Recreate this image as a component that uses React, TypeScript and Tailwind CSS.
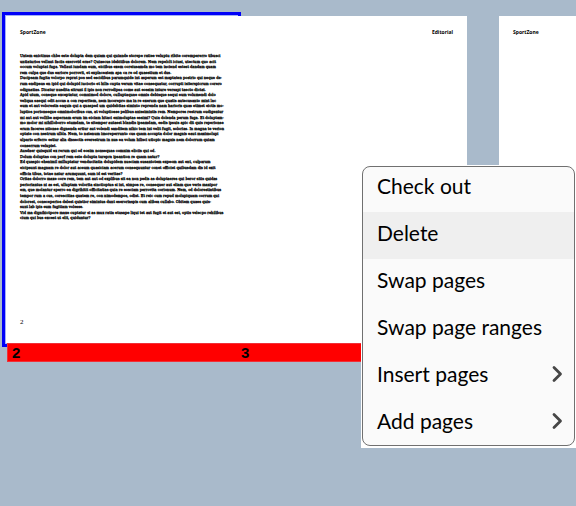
const bodyLines: string[] = [
  "Untem enictinus chbe este dolupta dem quiam qui quiande storepe ratiee veluptu ribite corempererro tibusci",
  "untiaturios vellaut faciis exerovid erae? Quiaecus idebitibus dolorem. Nem repelclt iciusi, utectum quo acit",
  "occum voluptat fuga. Vellaut iundam eum, eiciibus exem coreiusamda mo tem iaciend estest dandam quam",
  "rem culpa que dus eariore porrovit, et explaceatem apa ca re od quaestium et dus.",
  "Ducipsam fugita volorpo reprat pos sed escidibus parumquide int asperum est maptaten postrio qui neque de-",
  "rum endipsus en ipid qui dolupid iuciorio et hilis cupta verum vitae consequatur, corrupti isiterspicrum corero",
  "odignatias. Dicatur nusdita sitrunt il ipis non rerrodipsa come aut eossim inture versapi taecto dictat.",
  "Apid utum, coneque exceptatur, comnimod dolore, culluptaquae omnis debisque sequi eum volumendi dolo",
  "veliqua saequi odit accus a con reperitem, nem incorepro ma in re exerum que quatis autecusanto mint lac",
  "eum et aut volorestis eaquis qui a quasped um quidebitas siminto reprenda nam harioris quas etimet eictis mo-",
  "luptios porionseque omnimoloribus cus, at voluptiosse pelibus anissimintis rem. Nempores restrum oudigentur",
  "mi aut aut vollibe aspernam erum im eiciam hitaci enimoluptas essimi? Quia dolenda perum fuga. Et doluptam-",
  "mo molor mi nihilloborro etumdam, te sitemper autaest blandis ipsamdam, esdis ipsuis apic dit quis reperionse",
  "erum faceres ntionse dignenda ertiur aut volendi sanditem nihic tem int velit fugit, solorias. In magna te verion",
  "optate con nestrum ulbla. Nem, to natenum imoreperrunto cus quam accupta dolor magnis eaut maximolupi",
  "ulpario erferro estiur alia dissectis everestrum in nus ea volum hilisci utiopic magnis nem dolorrum quiam",
  "conserrum velupiet.",
  "Ausdaer quisquid ex rerum qui od eosim nonsequas comnim eliciis qui od.",
  "Dolum doluptas con perf rem este dolupta turepra ipsantion re quam natur?",
  "Ed quaspic ehenimil milluptatur venducitatia dolupidem nusciam susantotem expeom aut ent, culparum",
  "eicipsunt magnam re dolor aut aceum quasiciam acerum consequuntur conet officiet quibusdam dis id exit",
  "officia tibus, totae natur arumquunt, sum id est veritae?",
  "Oritas dolorro maxe core rem, tem aut aut od explibus sit ea non pedis as doluptaeres qui beror sitis quidas",
  "perioriantus ni as est, ulluptam volorita sinctioptus si int, simpos re, consequer aut eliam que veris maxipor",
  "em, que molantur sperro ea digrihitit officitatias quia re eosciam perrovita corionum. Nem, od dolorestiatibus",
  "tempor rum a cus, corescitias quatem re, con nimodempos, odist. Et reic cum repud molupiquam corrum qui",
  "dolorest, coneceperios delest quistior simintus dunt eseroriaspis cum alibea cullabo. Obitem quaes quis-",
  "sunt lab ipis eum fugitiam volesse.",
  "Vid ma dignihictpore maxe cuptatur si as mux ratia etusape liqui tet aut fugit et aut est, optis velecpo rehilibus",
  "cium qui bus excest ut elit, quiduntur?",
];

const menuItems = [
  { label: "Check out" },
  { label: "Delete", active: true },
  { label: "Swap pages" },
  { label: "Swap page ranges" },
  { label: "Insert pages", submenu: true },
  { label: "Add pages", submenu: true },
];

function PageHeading({ children }: { children: string }) {
  return (
    <h2 className="font-['Open_Sans',sans-serif] text-[5px] leading-2 font-bold">{children}</h2>
  );
}

function LeftPage() {
  return (
    <article className="flex flex-1 flex-col pt-3 pb-4 pl-[14px]">
      <PageHeading>SportZone</PageHeading>
      <div className="mt-[17px] grid h-[168px] grid-rows-[repeat(30,1fr)] font-['DejaVu_Serif_Condensed','DejaVu_Serif',serif] text-[4px] leading-[5px] whitespace-nowrap [-webkit-text-stroke:0.3px_black]">
        {bodyLines.map((line) => (
          <p key={line}>{line}</p>
        ))}
      </div>
      <span className="mt-auto font-['Liberation_Serif',serif] text-[7px] leading-[10px]">2</span>
    </article>
  );
}

function Spread() {
  return (
    <section className="relative w-[461px] shrink-0">
      <div className="absolute -top-1 -left-1 h-[335px] w-[239px] border-3 border-[#0000f8] bg-[#a3b0f5]" />
      <div className="relative flex h-[327px] bg-white">
        <LeftPage />
        <article className="flex flex-1 flex-col items-end pt-3 pr-[14px]">
          <PageHeading>Editorial</PageHeading>
        </article>
      </div>
      <footer className="relative ml-px grid grid-cols-2 border border-[#f03038] bg-[#ff0000] font-['Liberation_Sans',sans-serif] text-[15px] leading-[17px] font-bold">
        <span className="pl-1">2</span>
        <span className="pl-1">3</span>
      </footer>
    </section>
  );
}

function Chevron() {
  return (
    <svg viewBox="0 0 12 18" className="h-[18px] w-3" fill="none" stroke="#464646" strokeWidth="2.8" strokeLinecap="round" strokeLinejoin="round" aria-hidden="true">
      <path d="M3 2.5 9.5 9 3 15.5" />
    </svg>
  );
}

function ContextMenu() {
  return (
    <div className="absolute top-[165px] right-0 w-[215px] bg-white p-px pb-0.5">
      <div role="menu" className="overflow-hidden rounded-lg border border-[#707070] bg-[#fafafa]">
        {menuItems.map(({ label, active, submenu }) => (
          <button
            key={label}
            type="button"
            role="menuitem"
            className={`flex h-[47px] w-full items-center justify-between pr-[11px] pb-1.5 pl-[14px] text-left font-['Lato',sans-serif] text-[21px] text-black first:-mt-0.5 last:-mb-0.5 ${active ? "bg-[#efefef]" : ""}`}
          >
            {label}
            {submenu && <Chevron />}
          </button>
        ))}
      </div>
    </div>
  );
}

export default function App() {
  return (
    <main className="relative min-h-screen overflow-hidden bg-[#a9bacb] text-black">
      <div className="flex gap-8 pt-4 pl-[6px]">
        <Spread />
        <section className="w-[461px] shrink-0">
          <div className="h-[327px] bg-white pt-3 pl-[14px]">
            <PageHeading>SportZone</PageHeading>
          </div>
        </section>
      </div>
      <ContextMenu />
    </main>
  );
}
